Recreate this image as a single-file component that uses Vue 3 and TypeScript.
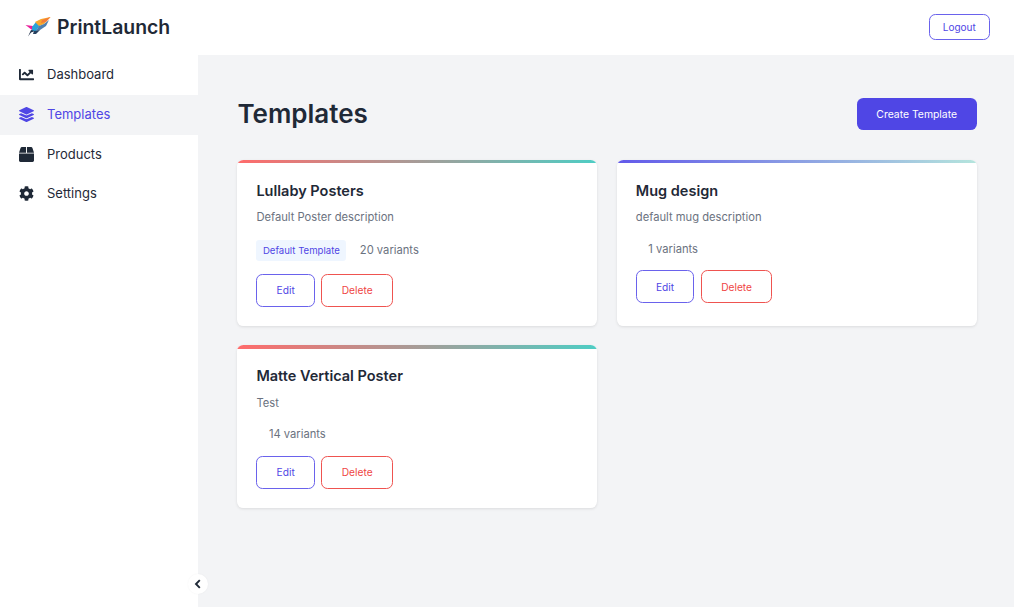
<template>
  <div class="app">
    <header class="topbar">
      <div class="brand">
        <svg class="logo" viewBox="0 0 26 20" width="26" height="20" aria-hidden="true">
          <path d="M0.5 8 L8 9 L7 13 Z" fill="#e91e9c" />
          <path d="M7 10 L11 5 L15 8 L11 14 L7 14 Z" fill="#2aa3d8" />
          <path d="M10 5 L16 2 L25.5 0 L19 7 L14 9 Z" fill="#f9a72b" />
          <path d="M17 3 L25.5 0 L21 5 L16 6 Z" fill="#f37c3a" />
          <path d="M14 9 L19 7 L24 3 L21 9 L15 13 L11 14 Z" fill="#4f7fae" />
          <path d="M3 19.5 L6 13 L10 14 L6 15.5 Z" fill="#1f2f4a" />
          <path d="M9 14 L15 13 L11 17 L8 17 Z" fill="#27405f" />
        </svg>
        <span class="brand-name">PrintLaunch</span>
      </div>
      <button type="button" class="btn btn-outline logout">Logout</button>
    </header>

    <div class="body">
      <aside class="sidebar">
        <nav>
          <a
            v-for="item in navItems"
            :key="item.label"
            class="nav-item"
            :class="{ active: item.label === 'Templates' }"
          >
            <svg class="nav-icon" viewBox="0 0 512 512" width="15" height="15" aria-hidden="true">
              <path :d="item.path" fill="currentColor" />
            </svg>
            <span>{{ item.label }}</span>
          </a>
        </nav>
        <button type="button" class="collapse" aria-label="Collapse">
          <svg viewBox="0 0 10 10" width="10" height="10" aria-hidden="true">
            <path d="M6.8 1.2 L3 5 L6.8 8.8" fill="none" stroke="#1f2937" stroke-width="1.9" />
          </svg>
        </button>
      </aside>

      <main class="main">
        <div class="page-head">
          <h1>Templates</h1>
          <button type="button" class="btn btn-primary">Create Template</button>
        </div>
        <div class="grid">
          <article v-for="t in templates" :key="t.name" class="card" :class="t.accent">
            <h3>{{ t.name }}</h3>
            <p class="desc">{{ t.description }}</p>
            <div class="meta">
              <span v-if="t.isDefault" class="badge">Default Template</span>
              <span class="variants" :class="{ indented: !t.isDefault }">{{ t.variants }} variants</span>
            </div>
            <div class="actions">
              <button type="button" class="btn btn-outline edit">Edit</button>
              <button type="button" class="btn btn-danger">Delete</button>
            </div>
          </article>
        </div>
      </main>
    </div>
  </div>
</template>

<script setup lang="ts">
interface NavItem {
  label: string;
  path: string;
}

interface Template {
  name: string;
  description: string;
  variants: number;
  isDefault?: boolean;
  accent: string;
}

const navItems: NavItem[] = [
  {
    label: "Dashboard",
    path: "M496 384H64V80c0-8.84-7.16-16-16-16H16C7.16 64 0 71.16 0 80v336c0 17.67 14.33 32 32 32h464c8.84 0 16-7.16 16-16v-32c0-8.84-7.16-16-16-16zM464 96H345.94c-21.38 0-32.09 25.85-16.97 40.97l32.4 32.4L288 242.75l-73.37-73.37c-12.5-12.5-32.76-12.5-45.25 0l-68.69 68.69c-6.25 6.25-6.25 16.38 0 22.63l22.62 22.62c6.25 6.25 16.38 6.25 22.63 0L192 237.25l73.37 73.37c12.5 12.5 32.76 12.5 45.25 0l96-96 32.4 32.4c15.12 15.12 40.97 4.41 40.97-16.97V112c.01-8.84-7.15-16-15.99-16z",
  },
  {
    label: "Templates",
    path: "M12.41 148.02l232.94 105.67c6.8 3.09 14.49 3.09 21.29 0l232.94-105.67c16.55-7.51 16.55-32.52 0-40.03L266.65 2.31a25.607 25.607 0 0 0-21.29 0L12.41 107.98c-16.55 7.51-16.55 32.53 0 40.04zm487.18 88.28l-58.09-26.33-161.64 73.27c-7.56 3.43-15.59 5.17-23.86 5.17s-16.29-1.74-23.86-5.17L70.51 209.97l-58.1 26.33c-16.55 7.5-16.55 32.5 0 40l232.94 105.59c6.8 3.08 14.49 3.08 21.29 0L499.59 276.3c16.55-7.5 16.55-32.5 0-40zm0 127.8l-57.87-26.23-161.86 73.37c-7.56 3.43-15.59 5.17-23.86 5.17s-16.29-1.74-23.86-5.17L70.29 337.87 12.41 364.1c-16.55 7.5-16.55 32.5 0 40l232.94 105.59c6.8 3.08 14.49 3.08 21.29 0L499.59 404.1c16.55-7.5 16.55-32.5 0-40z",
  },
  {
    label: "Products",
    path: "M509.5 184.6L458.9 32.8C452.4 13.2 434.1 0 413.4 0H272v192h238.7c-.4-2.5-.4-5-1.2-7.4zM240 0H98.6c-20.7 0-39 13.2-45.5 32.8L2.5 184.6c-.8 2.4-.8 4.9-1.2 7.4H240V0zM0 224v240c0 26.5 21.5 48 48 48h416c26.5 0 48-21.5 48-48V224H0z",
  },
  {
    label: "Settings",
    path: "M487.4 315.7l-42.6-24.6c4.3-23.2 4.3-47 0-70.2l42.6-24.6c4.9-2.8 7.1-8.6 5.5-14-11.1-35.6-30-67.8-54.7-94.6-3.8-4.1-10-5.1-14.8-2.3L380.8 110c-17.9-15.4-38.5-27.3-60.8-35.1V25.8c0-5.6-3.9-10.5-9.4-11.7-36.7-8.2-74.3-7.8-109.2 0-5.5 1.2-9.4 6.1-9.4 11.7V75c-22.2 7.9-42.8 19.8-60.8 35.1L88.7 85.5c-4.9-2.8-11-1.9-14.8 2.3-24.7 26.7-43.6 58.9-54.7 94.6-1.7 5.4.6 11.2 5.5 14L67.3 221c-4.3 23.2-4.3 47 0 70.2l-42.6 24.6c-4.9 2.8-7.1 8.6-5.5 14 11.1 35.6 30 67.8 54.7 94.6 3.8 4.1 10 5.1 14.8 2.3l42.6-24.6c17.9 15.4 38.5 27.3 60.8 35.1v49.2c0 5.6 3.9 10.5 9.4 11.7 36.7 8.2 74.3 7.8 109.2 0 5.5-1.2 9.4-6.1 9.4-11.7v-49.2c22.2-7.9 42.8-19.8 60.8-35.1l42.6 24.6c4.9 2.8 11 1.9 14.8-2.3 24.7-26.7 43.6-58.9 54.7-94.6 1.5-5.5-.7-11.3-5.6-14.1zM256 336c-44.1 0-80-35.9-80-80s35.9-80 80-80 80 35.9 80 80-35.9 80-80 80z",
  },
];

const templates: Template[] = [
  { name: "Lullaby Posters", description: "Default Poster description", variants: 20, isDefault: true, accent: "warm" },
  { name: "Mug design", description: "default mug description", variants: 1, accent: "cool" },
  { name: "Matte Vertical Poster", description: "Test", variants: 14, accent: "warm" },
];
</script>

<style>
html,
body {
  margin: 0;
  background: #f3f4f6;
}
</style>

<style scoped>
.app {
  width: 1014px;
  height: 607px;
  display: flex;
  flex-direction: column;
  overflow: hidden;
  font-family: Inter, "Liberation Sans", sans-serif;
  color: #1f2937;
}

.topbar {
  height: 55px;
  flex-shrink: 0;
  display: flex;
  align-items: center;
  justify-content: space-between;
  padding: 0 24.5px 1px 24.5px;
  box-sizing: border-box;
  background: #fff;
}

.brand {
  display: flex;
  align-items: center;
  gap: 6.5px;
}

.logo {
  margin-top: -1px;
}

.brand-name {
  font-size: 19.4px;
  font-weight: 600;
}

.body {
  flex: 1;
  display: flex;
  min-height: 0;
}

.sidebar {
  width: 198px;
  flex-shrink: 0;
  position: relative;
  background: #fff;
}

.nav-item {
  box-sizing: border-box;
  height: 39.75px;
  padding: 0 0 0.4px 19px;
  display: flex;
  align-items: center;
  gap: 13px;
  font-size: 13px;
  line-height: 1;
  color: #1f2937;
}

.nav-item.active {
  background: #f3f4f6;
  color: #4f46e5;
}

.nav-icon {
  flex-shrink: 0;
}

.collapse {
  position: absolute;
  right: -10px;
  bottom: 13px;
  width: 20px;
  height: 20px;
  padding: 0;
  border: none;
  border-radius: 50%;
  background: #fff;
  box-shadow: 0 0 2px rgba(0, 0, 0, 0.05);
  display: flex;
  align-items: center;
  justify-content: center;
}

.main {
  flex: 1;
  padding: 43px 37.3px 0 39.4px;
}

.page-head {
  display: flex;
  align-items: center;
  justify-content: space-between;
  margin-bottom: 29.9px;
}

h1 {
  margin: 0;
  font-size: 26px;
  line-height: 32px;
  font-weight: 600;
}

.btn {
  font-family: Inter, sans-serif;
  font-size: 10.2px;
  line-height: 1;
  border-radius: 6.4px;
  background: #fff;
  cursor: pointer;
}

.btn-primary {
  width: 120px;
  height: 32px;
  padding-top: 3px;
  border: none;
  background: #4f46e5;
  color: #fff;
  font-size: 10.4px;
}

.btn-outline {
  border: 1px solid #6a62ec;
  color: #4f46e5;
}

.logout {
  width: 60.5px;
  height: 26.5px;
  font-size: 10px;
}

.edit {
  width: 58.5px;
  height: 33px;
}

.btn-danger {
  width: 71.5px;
  height: 33px;
  border: 1px solid #ef5350;
  color: #ef4444;
}

.grid {
  display: grid;
  grid-template-columns: 1fr 1fr;
  gap: 19.5px 19.6px;
  align-items: stretch;
}

.card {
  position: relative;
  box-sizing: border-box;
  padding: 22px 19px 19px;
  border-radius: 6.4px;
  background: #fff;
  box-shadow: 0 1px 3px rgba(0, 0, 0, 0.1);
  overflow: hidden;
}

.card::before {
  content: "";
  position: absolute;
  top: 0;
  left: 0;
  right: 0;
  height: 3.5px;
}

.card.warm::before {
  background: linear-gradient(90deg, #ff6b6b 0%, #4ecdc4 100%);
}

.card.cool::before {
  background: linear-gradient(90deg, #6259ea 0%, #b5e5dd 100%);
}

h3 {
  margin: 0;
  font-size: 14.5px;
  line-height: 18px;
  font-weight: 600;
}

.desc {
  margin: 9.3px 0 0;
  font-size: 11.2px;
  line-height: 16px;
  color: #6b7280;
}

.meta {
  display: flex;
  align-items: center;
  gap: 13.5px;
  margin-top: 14.7px;
  min-height: 17.5px;
  font-size: 11.2px;
  color: #6b7280;
}

.variants.indented {
  margin-left: 12.5px;
}

.badge {
  height: 21px;
  display: flex;
  align-items: center;
  padding: 0 6.5px;
  border-radius: 3.2px;
  background: #eff6ff;
  color: #4f46e5;
  font-size: 9.6px;
}

.actions {
  display: flex;
  gap: 6.5px;
  margin-top: 13px;
}
</style>
